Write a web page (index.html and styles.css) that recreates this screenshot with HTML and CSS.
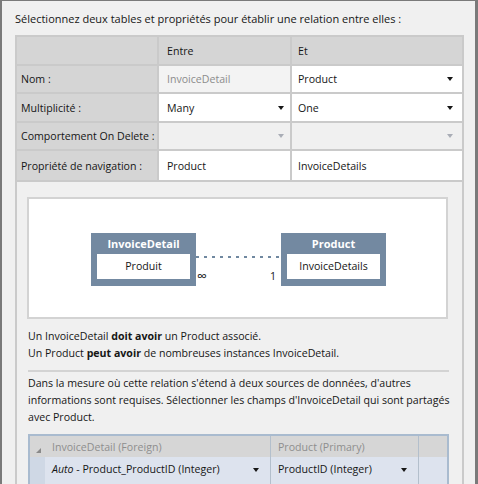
FILE: index.html
```html
<!DOCTYPE html>
<html lang="fr">
<head>
<meta charset="utf-8">
<title>Relation</title>
<link rel="stylesheet" href="styles.css">
</head>
<body>
<div class="window">
  <p class="title">Sélectionnez deux tables et propriétés pour établir une relation entre elles :</p>
  <div class="panel">
    <div class="props">
      <div class="cell hdr"></div>
      <div class="cell hdr col-a">Entre</div>
      <div class="cell hdr col-b">Et</div>

      <div class="cell lbl">Nom :</div>
      <div class="cell col-a ro">InvoiceDetail</div>
      <div class="cell col-b inp">Product<span class="arrow"></span></div>

      <div class="cell lbl">Multiplicité :</div>
      <div class="cell col-a inp">Many<span class="arrow"></span></div>
      <div class="cell col-b inp">One<span class="arrow"></span></div>

      <div class="cell lbl">Comportement On Delete :</div>
      <div class="cell col-a off"><span class="arrow arrow-off"></span></div>
      <div class="cell col-b off"><span class="arrow arrow-off"></span></div>

      <div class="cell lbl">Propriété de navigation :</div>
      <div class="cell col-a inp">Product</div>
      <div class="cell col-b inp">InvoiceDetails</div>
    </div>

    <div class="diagram">
      <div class="entity">
        <div class="entity-name">InvoiceDetail</div>
        <div class="entity-prop">Produit</div>
      </div>
      <div class="link">
        <div class="link-line"></div>
        <div class="link-ends"><span class="many">∞</span><span>1</span></div>
      </div>
      <div class="entity">
        <div class="entity-name">Product</div>
        <div class="entity-prop">InvoiceDetails</div>
      </div>
    </div>

    <p class="rule rule-first">Un InvoiceDetail <b>doit avoir</b> un Product associé.</p>
    <p class="rule">Un Product <b>peut avoir</b> de nombreuses instances InvoiceDetail.</p>
    <div class="sep"></div>
    <p class="info">Dans la mesure où cette relation s'étend à deux sources de données, d'autres<br>informations sont requises. Sélectionner les champs d'InvoiceDetail qui sont partagés<br>avec Product.</p>

    <div class="keys">
      <div class="kcell khead kcorner"><span class="corner-mark"></span></div>
      <div class="kcell khead kcol">InvoiceDetail (Foreign)</div>
      <div class="kcell khead kcol">Product (Primary)</div>
      <div class="kcell khead"></div>

      <div class="kcell krowhead"></div>
      <div class="kcell kdata kcol"><span><i>Auto</i> - Product_ProductID (Integer)</span><span class="arrow"></span></div>
      <div class="kcell kdata kcol"><span>ProductID (Integer)</span><span class="arrow"></span></div>
      <div class="kcell kdata"></div>
    </div>
  </div>
</div>
</body>
</html>
```
FILE: styles.css
```css
* { box-sizing: border-box; }
html, body { margin: 0; padding: 0; }
body {
  background: #f0f0f0;
  font-family: "Open Sans", "Noto Sans", sans-serif;
  font-size: 10.6px;
  color: #161616;
}
.window {
  width: 478px;
  height: 484px;
  overflow: hidden;
  background: #f0f0f0;
  border-top: 1px solid #7a7a7a;
  border-left: 2px solid #7a7a7a;
  border-right: 3px solid #7a7a7a;
}
.title {
  margin: 0;
  padding: 9px 0 0 13px;
  height: 34px;
  line-height: 17px;
  font-size: 11px;
}
.panel {
  margin-left: 13px;
  width: 449px;
  height: 460px;
  border: 2px solid #cacaca;
  border-bottom: 0;
}
.props {
  display: grid;
  grid-template-columns: 140px 131px 170px;
  grid-template-rows: 27px 26px 27px 26px 29px;
  gap: 2px;
  background: #cacaca;
  border-bottom: 2px solid #cacaca;
}
.cell {
  display: flex;
  align-items: center;
  padding-left: 8px;
  white-space: nowrap;
}
.hdr, .lbl { background: #d5d5d5; }
.lbl { padding-left: 4px; }
.col-a { padding-left: 8px; padding-right: 6px; }
.col-b { padding-left: 6px; padding-right: 9px; }
.inp { background: #fff; justify-content: space-between; }
.ro { background: #f3f3f3; color: #8c8c8c; }
.off { background: #f0f0f0; justify-content: flex-end; }
.arrow {
  width: 0;
  height: 0;
  border-left: 3.5px solid transparent;
  border-right: 3.5px solid transparent;
  border-top: 4px solid #161616;
}
.arrow-off { border-top-color: #a9adb6; }

.diagram {
  margin: 15px 14px 0 10px;
  height: 122px;
  background: #fff;
  border: 2px solid #d3d3d3;
  display: flex;
  align-items: flex-start;
  padding: 34px 0 0 62px;
}
.entity {
  width: 105px;
  height: 53px;
  background: #7389a1;
  padding: 0 6px 7px;
  display: flex;
  flex-direction: column;
}
.entity-name {
  height: 21px;
  line-height: 21px;
  text-align: center;
  color: #fff;
  font-weight: 700;
  font-size: 11px;
}
.entity-prop {
  height: 25px;
  line-height: 25px;
  background: #fff;
  text-align: center;
}
.link {
  width: 85px;
  display: flex;
  flex-direction: column;
}
.link-line {
  margin-top: 23px;
  height: 2px;
  background: repeating-linear-gradient(90deg, #7088a0 0 3px, transparent 3px 8px);
}
.link-ends {
  display: flex;
  justify-content: space-between;
  align-items: center;
  margin-top: 11px;
  height: 14px;
  line-height: 14px;
  padding: 0 5px 0 1px;
}
.many { font-size: 14px; }

.rule { margin: 0 0 0 11px; line-height: 17px; }
.rule-first { margin-top: 9px; }
.sep {
  margin: 8px 0 0 11px;
  width: 421px;
  height: 2px;
  background: #d3d3d3;
}
.info {
  margin: 3px 0 0 11px;
  width: 421px;
  line-height: 17px;
  white-space: nowrap;
}
.keys {
  margin: 8px 0 0 11px;
  width: 421px;
  display: grid;
  grid-template-columns: 15px 226px 148px 1fr;
  grid-template-rows: 21px 30px;
  border: 2px solid #a9bbcf;
  border-bottom: 0;
}
.kcell {
  display: flex;
  align-items: center;
  white-space: nowrap;
}
.khead { background: #d6d6d6; color: #8e8e8e; }
.kcol {
  padding: 0 11px 0 7px;
  justify-content: space-between;
  border-right: 1px solid #b3bfcc;
}
.kcorner { align-items: flex-end; padding: 0 0 4px 6px; }
.corner-mark {
  width: 0;
  height: 0;
  border-left: 5px solid transparent;
  border-bottom: 5px solid #8a8a8a;
}
.krowhead { background: #cfd8e5; }
.kdata { background: #dde3ee; align-items: flex-start; padding-top: 5px; }
.kdata .arrow { margin-top: 6px; }
```
